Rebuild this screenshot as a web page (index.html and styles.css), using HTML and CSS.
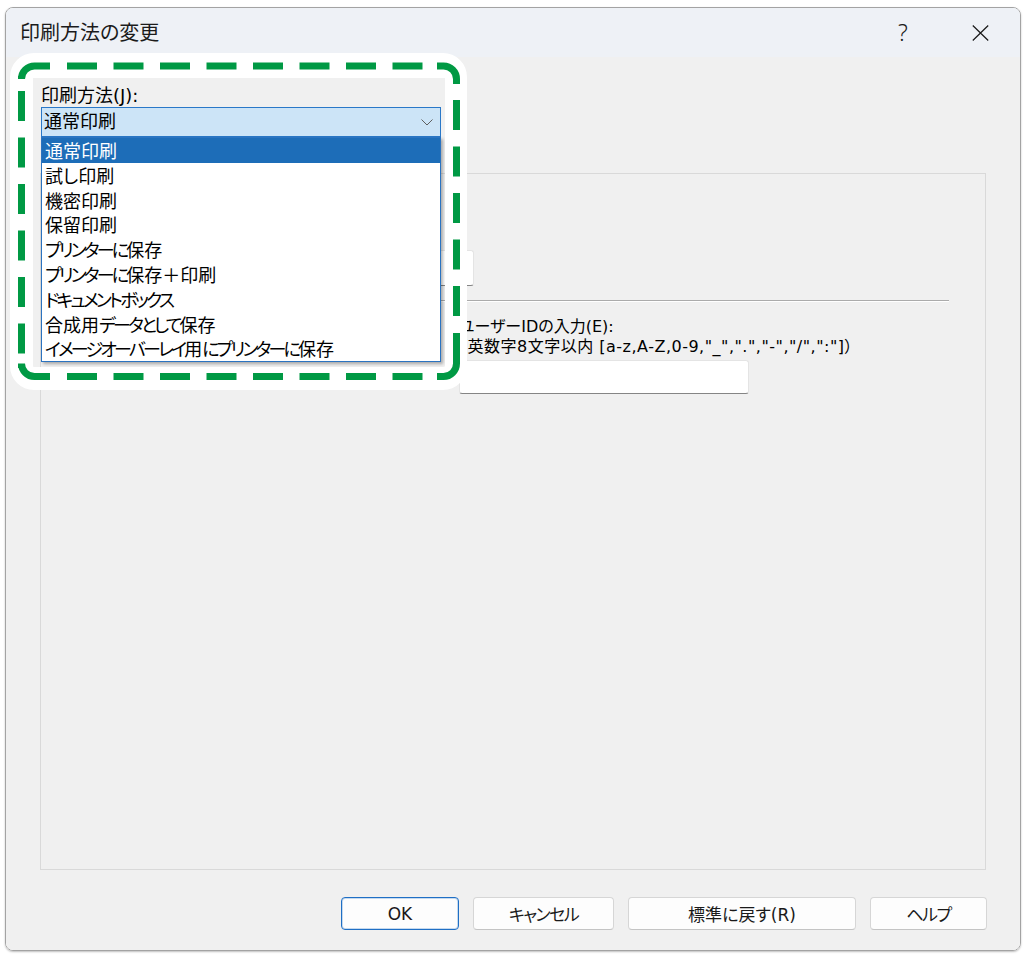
FILE: index.html
```html
<!DOCTYPE html>
<html lang="ja">
<head>
<meta charset="utf-8">
<title>印刷方法の変更</title>
<link rel="stylesheet" href="styles.css">
</head>
<body>
<div class="window">
  <div class="titlebar">
    <div class="title">印刷方法の変更</div>
    <div class="tb-btn help">?</div>
    <div class="tb-btn close">
      <svg width="17" height="16" viewBox="0 0 17 16"><path d="M0.8 0.5 L16.2 15.5 M16.2 0.5 L0.8 15.5" stroke="#1a1a1a" stroke-width="1.25" fill="none"/></svg>
    </div>
  </div>
  <div class="content">
    <div class="field-label">印刷方法(J):</div>
    <div class="combo-wrap">
      <div class="combo">
        <span class="combo-text">通常印刷</span>
        <svg class="chev" width="12" height="7" viewBox="0 0 12 7"><polyline points="0.5,0.5 6,6 11.5,0.5" stroke="#5f5f5f" stroke-width="1" fill="none"/></svg>
      </div>
      <ul class="dropdown">
        <li class="selected">通常印刷</li>
        <li>試し印刷</li>
        <li>機密印刷</li>
        <li>保留印刷</li>
        <li><span class="kn">プリンターに</span>保存</li>
        <li><span class="kn">プリンターに</span>保存＋印刷</li>
        <li><span class="kn">ドキュメントボックス</span></li>
        <li>合成用<span class="kn">データとして</span>保存</li>
        <li><span class="kn">イメージオーバーレイ</span>用<span class="kn">にプリンターに</span>保存</li>
      </ul>
    </div>
    <div class="group">
      <div class="upper">
        <div class="textbox upper-box"></div>
      </div>
      <div class="separator"></div>
      <div class="lower">
        <div class="id-label">ユーザーIDの入力(E):</div>
        <div class="id-hint">（英数字8文字以内 [a-z,A-Z,0-9,"_",".","-","/",":"]）</div>
        <div class="textbox id-input"></div>
      </div>
    </div>
    <div class="buttons">
      <div class="btn btn-ok">OK</div>
      <div class="btn btn-cancel"><span class="kn">キャンセル</span></div>
      <div class="btn btn-reset">標準に戻す(R)</div>
      <div class="btn btn-help"><span class="kn">ヘルプ</span></div>
    </div>
  </div>
</div>
<div class="callout"></div>
<svg class="callout-dash" width="457" height="337" viewBox="10 53 457 337">
  <g stroke="#009944" stroke-width="7" fill="none">
    <path class="dash" d="M67 66 H423"/>
    <path class="dash" d="M67 376.5 H423"/>
    <path class="dash" d="M21.5 91 V354"/>
    <path class="dash" d="M456.5 100 V319"/>
    <path d="M21.5 76 V79 A13 13 0 0 1 34.5 66 H50"/>
    <path d="M21.5 368 V363.5 A13 13 0 0 0 34.5 376.5 H50"/>
    <path d="M437 66 H443.5 A13 13 0 0 1 456.5 79 V84"/>
    <path d="M456.5 333 V363.5 A13 13 0 0 1 443.5 376.5 H437"/>
  </g>
</svg>
</body>
</html>
```

FILE: styles.css
```css
* { box-sizing: border-box; }

html, body {
  margin: 0;
  background: #ffffff;
}

body {
  position: relative;
  width: 1028px;
  height: 962px;
  overflow: hidden;
  padding: 7px 0 0 5px;
  font-family: "DejaVu Sans", "Noto Sans CJK JP", sans-serif;
  font-feature-settings: "palt";
  color: #000;
}

.window {
  width: 1016px;
  height: 944px;
  border: 1px solid #a3a3a3;
  border-radius: 8px;
  overflow: hidden;
  display: flex;
  flex-direction: column;
  box-shadow: 0 1px 2px rgba(0, 0, 0, 0.25);
}

.titlebar {
  height: 49px;
  flex: none;
  background: #eef1f6;
  display: flex;
  align-items: center;
}

.title {
  flex: 1;
  padding-left: 14px;
  font-size: 20px;
  line-height: 26px;
  color: #1b1b1b;
}

.tb-btn {
  height: 49px;
  display: flex;
  align-items: center;
  justify-content: center;
  color: #1b1b1b;
}

.help {
  width: 74px;
  font-family: "Noto Sans", sans-serif;
  font-size: 23px;
  font-weight: 300;
  padding-bottom: 1px;
}

.close {
  width: 80px;
}

.content {
  flex: 1;
  background: #f0f0f0;
  padding: 26px 34px 20px 34px;
  display: flex;
  flex-direction: column;
}

.field-label {
  height: 24px;
  font-size: 18px;
  line-height: 24px;
  padding: 1px 0 0 1px;
}

.combo-wrap {
  position: relative;
  width: 400px;
  height: 30px;
  margin-left: 1px;
}

.combo {
  height: 30px;
  border: 1px solid #2a78c8;
  background: #cce4f7;
  display: flex;
  align-items: center;
  padding: 0 7px 0 2px;
}

.combo-text {
  flex: 1;
  font-size: 18px;
  line-height: 24px;
}

.dropdown {
  position: absolute;
  top: 30px;
  left: 0;
  width: 400px;
  height: 225px;
  margin: 0;
  padding: 0;
  list-style: none;
  background: #ffffff;
  border: 1px solid #2b73c0;
  box-shadow: 2px 2px 3px rgba(0, 0, 0, 0.3);
  z-index: 5;
}

.dropdown li {
  height: 24.8px;
  line-height: 20.8px;
  padding: 4px 0 0 3px;
  font-size: 18px;
  white-space: nowrap;
}

.dropdown li.selected {
  background: #1d6db8;
  color: #ffffff;
}

.dropdown .kn {
  letter-spacing: -2.8px;
}

.group {
  margin-top: 36px;
  height: 697px;
  border: 1px solid #d9d9d9;
  display: flex;
  flex-direction: column;
}

.upper {
  height: 126px;
  flex: none;
  padding: 76px 0 0 259px;
}

.textbox {
  background: #ffffff;
  border: 1px solid #e4e4e4;
  border-bottom-color: #858585;
  border-radius: 3px;
}

.upper-box {
  width: 174px;
  height: 36px;
}

.separator {
  height: 2px;
  margin: 0 36px;
  border-top: 1px solid #ababab;
  border-bottom: 1px solid #ffffff;
}

.lower {
  padding: 15px 0 0 418px;
}

.id-label,
.id-hint {
  font-size: 16px;
  line-height: 20px;
  white-space: nowrap;
}

.id-hint {
  letter-spacing: 0.5px;
}

.id-input {
  margin-top: 3px;
  width: 290px;
  height: 34px;
}

.buttons {
  margin-top: 27px;
  margin-right: -1px;
  display: flex;
  justify-content: flex-end;
  gap: 14px;
}

.btn {
  height: 33px;
  display: flex;
  align-items: center;
  justify-content: center;
  background: #fdfdfd;
  border: 1px solid #d6d6d6;
  border-bottom-color: #c4c4c4;
  border-radius: 4px;
  font-size: 17px;
  color: #1a1a1a;
}

.btn .kn {
  letter-spacing: -1.5px;
}

.btn-ok {
  width: 118px;
  border-color: #1f6fc5;
  box-shadow: inset 0 0 0 1px rgba(31, 111, 197, 0.25);
}

.btn-cancel { width: 141px; }
.btn-reset { width: 228px; }
.btn-help { width: 117px; }

.callout {
  position: absolute;
  left: 10px;
  top: 53px;
  width: 457px;
  height: 337px;
  border-style: solid;
  border-color: #ffffff;
  border-width: 25px 22px 23px 23px;
  border-radius: 24px;
  z-index: 10;
}

.callout-dash {
  position: absolute;
  left: 10px;
  top: 53px;
  z-index: 11;
}

.callout-dash .dash {
  stroke-dasharray: 30 16.5;
}
```
